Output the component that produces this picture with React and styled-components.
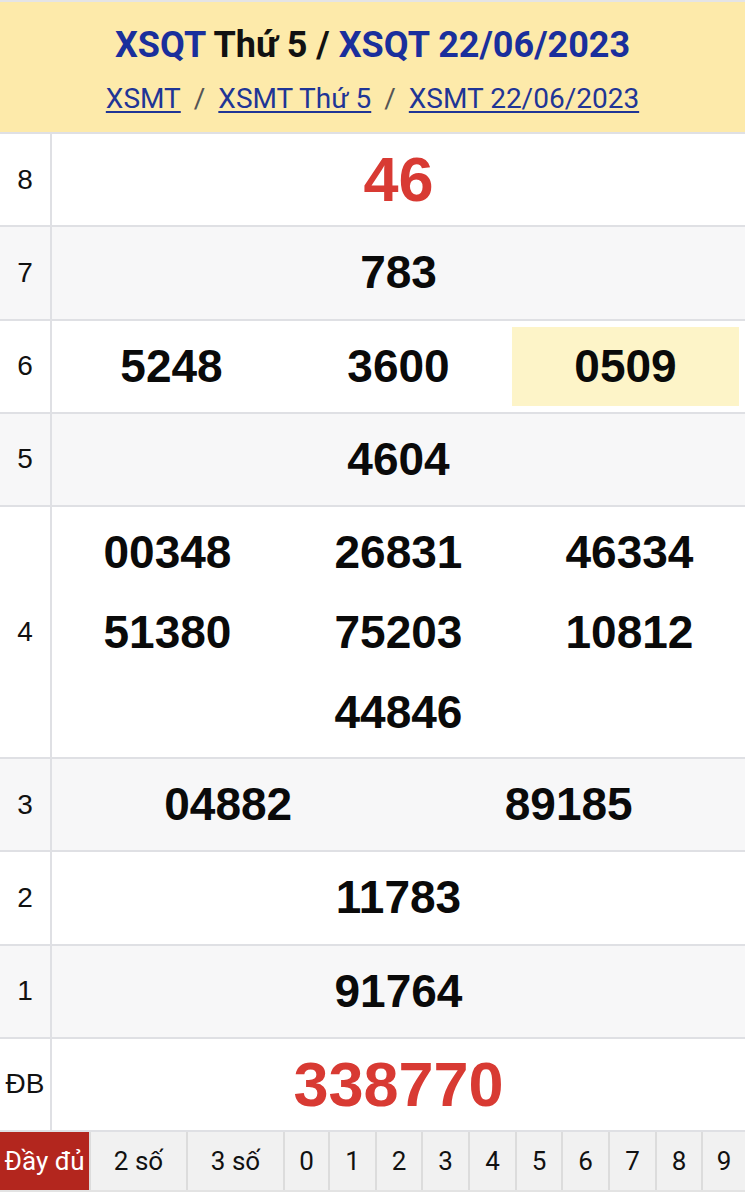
import React from 'react'
import styled, { createGlobalStyle } from 'styled-components'

const GlobalStyle = createGlobalStyle`
  html, body { margin: 0; padding: 0; background: #fff; }
  body { font-family: Roboto, "Liberation Sans", Arial, sans-serif; }
`

const Page = styled.div`
  width: 745px;
  border-top: 2px solid #e4e4e6;
`

const Header = styled.div`
  background: #fdeaaa;
  height: 132px;
  display: flex;
  flex-direction: column;
  align-items: center;
  justify-content: center;
  gap: 18px;
  padding-top: 6px;
  box-sizing: border-box;
  border-bottom: 2px solid #dfe0e4;
`

const Title = styled.h1`
  margin: 0;
  font-family: Roboto, sans-serif;
  font-weight: 700;
  font-size: 36px;
  line-height: 40px;
  color: #111;
  a { color: #1a2f9c; text-decoration: none; }
`

const Crumbs = styled.div`
  font-family: Roboto, sans-serif;
  font-size: 28px;
  line-height: 32px;
  color: #555;
  display: flex;
  gap: 13px;
  a { color: #1f3596; text-decoration: underline; text-underline-offset: 3px; }
`

const Row = styled.div`
  display: grid;
  grid-template-columns: 52px 1fr;
  min-height: 91.25px;
  border-bottom: 2px solid #dfe0e4;
  background: ${p => (p.$alt ? '#f7f7f8' : '#fff')};
`

const Label = styled.div`
  display: flex;
  align-items: center;
  justify-content: center;
  border-right: 2px solid #dfe0e4;
  font-family: "Liberation Sans", Arial, sans-serif;
  font-size: 28px;
  color: #111;
`

const Numbers = styled.div`
  display: grid;
  grid-template-columns: repeat(${p => p.$cols}, 1fr);
  align-items: center;
  padding: ${p => (p.$tall ? '5px 0' : '6px 6px')};
`

const Num = styled.div`
  text-align: center;
  font-family: "Liberation Sans", Arial, sans-serif;
  font-weight: 700;
  font-size: ${p => (p.$big ? '63px' : '46px')};
  line-height: ${p => (p.$tall ? '80px' : '79px')};
  color: ${p => (p.$big ? '#d83a33' : '#0a0a0a')};
  background: ${p => (p.$mark ? '#fdf4c8' : 'transparent')};
  grid-column: ${p => p.$col || 'auto'};
`

const Tabs = styled.div`
  display: grid;
  grid-template-columns: 91px 97px 97px 45px 47px 46px 47px 47px 46px 47px 47px 46px 1fr;
  height: 58px;
  background: #f1f1f1;
  border-bottom: 2px solid #e3e3e3;
`

const Tab = styled.div`
  display: flex;
  align-items: center;
  justify-content: center;
  font-family: Roboto, sans-serif;
  font-size: 26px;
  color: ${p => (p.$active ? '#fff' : '#111')};
  background: ${p => (p.$active ? '#b3261e' : 'transparent')};
  border-right: 2px solid #dcdcdc;
  &:last-child { border-right: none; }
`

const prizes = [
  { label: '8', cols: 1, nums: ['46'], big: true },
  { label: '7', cols: 1, nums: ['783'] },
  { label: '6', cols: 3, nums: ['5248', '3600', '0509'], mark: 2 },
  { label: '5', cols: 1, nums: ['4604'] },
  { label: '4', cols: 3, nums: ['00348', '26831', '46334', '51380', '75203', '10812', '44846'], tall: true },
  { label: '3', cols: 2, nums: ['04882', '89185'] },
  { label: '2', cols: 1, nums: ['11783'] },
  { label: '1', cols: 1, nums: ['91764'] },
  { label: 'ĐB', cols: 1, nums: ['338770'], big: true },
]

const tabs = ['Đầy đủ', '2 số', '3 số', '0', '1', '2', '3', '4', '5', '6', '7', '8', '9']

export default function App() {
  return (
    <Page>
      <GlobalStyle />
      <Header>
        <Title>
          <a href="#">XSQT</a> Thứ 5 / <a href="#">XSQT 22/06/2023</a>
        </Title>
        <Crumbs>
          <a href="#">XSMT</a>
          <span>/</span>
          <a href="#">XSMT Thứ 5</a>
          <span>/</span>
          <a href="#">XSMT 22/06/2023</a>
        </Crumbs>
      </Header>
      {prizes.map((p, i) => (
        <Row key={p.label} $alt={i % 2 === 1}>
          <Label>{p.label}</Label>
          <Numbers $cols={p.cols} $tall={p.tall}>
            {p.nums.map((n, j) => (
              <Num
                key={n}
                $big={p.big}
                $tall={p.tall}
                $mark={p.mark === j}
                $col={p.tall && j === 6 ? 2 : undefined}
              >
                {n}
              </Num>
            ))}
          </Numbers>
        </Row>
      ))}
      <Tabs>
        {tabs.map((t, i) => (
          <Tab key={t + i} $active={i === 0}>{t}</Tab>
        ))}
      </Tabs>
    </Page>
  )
}
